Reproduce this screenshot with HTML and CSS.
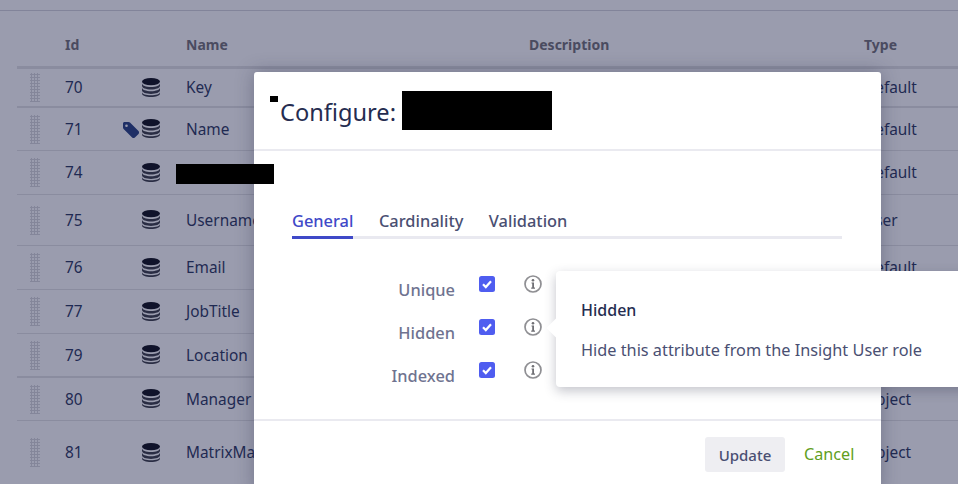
FILE: index.html
```html
<!DOCTYPE html>
<html lang="en">
<head>
<meta charset="utf-8">
<title>Configure attribute</title>
<link rel="stylesheet" href="styles.css">
</head>
<body>
<svg class="defs" width="0" height="0" aria-hidden="true">
  <symbol id="db" viewBox="0 0 18 19">
    <ellipse cx="9" cy="3.6" rx="9" ry="3.6" fill="#10132b"/>
    <path d="M0 5.2c0 2.2 4 3.8 9 3.8s9-1.6 9-3.8v2.6c0 2.2-4 3.7-9 3.7s-9-1.5-9-3.700z" fill="#2a2d44"/>
    <path d="M0 9.600c0 2.200 4 3.700 9 3.700s9-1.500 9-3.700v2.700c0 2.200-4 3.600-9 3.600s-9-1.400-9-3.600z" fill="#2a2d44"/>
    <path d="M0 13.900c0 2.200 4 3.300 9 3.300s9-1.100 9-3.300v1.500c0 2.100-4 3.500-9 3.500s-9-1.400-9-3.500z" fill="#2a2d44"/>
  </symbol>
  <symbol id="info" viewBox="0 0 18 18">
    <circle cx="9" cy="9" r="8" fill="none" stroke="#8f8f93" stroke-width="1.700"/>
    <circle cx="9" cy="5.200" r="1.300" fill="#6f6f74"/>
    <path d="M7.500 7.600h2.500v5h1v1.100H7.200v-1.100h1V8.600h-.7z" fill="#6f6f74"/>
  </symbol>
  <symbol id="check" viewBox="0 0 16 16">
    <rect width="16" height="16" rx="2.500" fill="#4f5df0"/>
    <path d="M4 8.300l2.800 2.800L12 5.200" fill="none" stroke="#fff" stroke-width="2.200"/>
  </symbol>
</svg>

<main class="page">
  <div class="table">
    <div class="row head">
      <span></span><span>Id</span><span></span><span>Name</span><span>Description</span><span>Type</span>
    </div>
    <div class="row r1 thick"><i class="grip"></i><span>70</span><span class="icons"><svg class="dbi"><use href="#db"/></svg></span><span>Key</span><span></span><span>Default</span></div>
    <div class="row r2"><i class="grip"></i><span>71</span><span class="icons">
      <svg class="tag" viewBox="0 0 17 16"><path d="M1 1.500C1 .7 1.700 0 2.500 0h4c.6 0 1.100.2 1.500.6l8.500 8.500c.8.8.8 2 0 2.800l-3.600 3.600c-.8.8-2 .8-2.800 0L1.600 7c-.4-.4-.6-.9-.6-1.500z" fill="#1f2f66"/><circle cx="4.500" cy="3.700" r="1.300" fill="#9a9cae"/></svg>
      <svg class="dbi"><use href="#db"/></svg></span><span>Name</span><span></span><span>Default</span></div>
    <div class="row r3"><i class="grip"></i><span>74</span><span class="icons"><svg class="dbi"><use href="#db"/></svg></span><span><b class="redact name"></b></span><span></span><span>Default</span></div>
    <div class="row r4"><i class="grip"></i><span>75</span><span class="icons"><svg class="dbi"><use href="#db"/></svg></span><span>Username</span><span></span><span>User</span></div>
    <div class="row r5"><i class="grip"></i><span>76</span><span class="icons"><svg class="dbi"><use href="#db"/></svg></span><span>Email</span><span></span><span>Default</span></div>
    <div class="row r5"><i class="grip"></i><span>77</span><span class="icons"><svg class="dbi"><use href="#db"/></svg></span><span>JobTitle</span><span></span><span></span></div>
    <div class="row r5 thick"><i class="grip"></i><span>79</span><span class="icons"><svg class="dbi"><use href="#db"/></svg></span><span>Location</span><span></span><span></span></div>
    <div class="row r8"><i class="grip"></i><span>80</span><span class="icons"><svg class="dbi"><use href="#db"/></svg></span><span>Manager</span><span></span><span>Object</span></div>
    <div class="row r9"><i class="grip"></i><span>81</span><span class="icons"><svg class="dbi"><use href="#db"/></svg></span><span>MatrixManager</span><span></span><span>Object</span></div>
  </div>

  <section class="modal">
    <b class="redact speck"></b>
    <header class="modal-head">
      <h1>Configure:</h1><b class="redact title"></b>
    </header>
    <div class="modal-body">
      <nav class="tabs">
        <a class="tab active">General</a>
        <a class="tab">Cardinality</a>
        <a class="tab">Validation</a>
      </nav>
      <div class="fields">
        <div class="field"><label>Unique</label><svg class="cb"><use href="#check"/></svg><svg class="inf"><use href="#info"/></svg></div>
        <div class="field"><label>Hidden</label><svg class="cb"><use href="#check"/></svg><svg class="inf"><use href="#info"/></svg></div>
        <div class="field"><label>Indexed</label><svg class="cb"><use href="#check"/></svg><svg class="inf"><use href="#info"/></svg></div>
      </div>
    </div>
    <footer class="modal-foot">
      <button class="update" type="button">Update</button>
      <a class="cancel">Cancel</a>
    </footer>
  </section>

  <aside class="pop">
    <h2>Hidden</h2>
    <p>Hide this attribute from the Insight User role</p>
  </aside>
</main>
</body>
</html>
```
FILE: styles.css
```css
* { box-sizing: border-box; }
html, body { margin: 0; height: 100%; overflow: hidden; }
body {
  background: #9a9cae;
  font-family: "Noto Sans", "Open Sans", sans-serif;
  font-size: 15.4px;
  color: #1f2a52;
}
.defs { position: absolute; }
.page { position: relative; width: 958px; height: 484px; overflow: hidden; }
.page::before { content: ""; display: block; height: 10px; border-bottom: 1px solid #82849a; }

.table { margin-left: 17px; }
.row {
  display: grid;
  grid-template-columns: 48px 70px 51px 343px 335px 1fr;
  align-items: center;
  border-bottom: 1px solid #8a8c9f;
}
.row.head {
  height: 58px;
  border-bottom: 3px solid #8a8c9f;
  font-size: 14px;
  font-weight: 700;
  color: #4a4b60;
  padding-top: 12px;
}
.row.thick { border-bottom: 2px solid #8a8c9f; }
.r1 { height: 39px; }
.r2 { height: 43px; }
.r3 { height: 44px; }
.r4 { height: 51px; }
.r5 { height: 44px; }
.r8 { height: 43px; }
.r9 { height: 64px; }
.grip {
  display: block;
  width: 10px;
  height: 29px;
  margin-left: 13px;
  background-image: radial-gradient(#84869a 1px, transparent 1.200px);
  background-size: 3px 3px;
}
.icons { display: flex; justify-content: flex-end; align-items: center; position: relative; }
.dbi { width: 18px; height: 19px; margin-right: 26px; margin-top: -1px; }
.tag { position: absolute; right: 47px; top: 2px; width: 17px; height: 16px; }
.redact { background: #000; display: block; }
.redact.name { position: absolute; left: 176px; top: 164px; width: 98px; height: 20px; z-index: 3; }

.modal {
  position: absolute;
  left: 254px;
  top: 72px;
  width: 627px;
  height: 420px;
  background: #fff;
  border-radius: 3px;
  box-shadow: 0 0 18px rgba(40, 42, 70, .35);
  display: flex;
  flex-direction: column;
  color: #2a3154;
}
.speck { position: absolute; left: 16px; top: 24px; width: 8px; height: 6px; }
.modal-head {
  height: 79px;
  flex: none;
  display: flex;
  align-items: center;
  padding-left: 26px;
  border-bottom: 2px solid #eaeaf0;
  gap: 6px;
}
.modal-head h1 { margin: 3px 0 0; font-size: 23.600px; font-weight: 400; color: #252c50; }
.redact.title { width: 150px; height: 39px; }
.modal-body { flex: none; height: 270px; border-bottom: 2px solid #eaeaf0; padding: 52px 39px 0 38px; }
.tabs { display: flex; gap: 25.500px; border-bottom: 3px solid #e9e9f0; height: 36px; }
.tab { height: 36px; font-size: 16.400px; font-weight: 500; color: #4a4f72; padding-top: 6px; }
.tab.active { color: #3f49c8; border-bottom: 3px solid #3f49c8; }
.fields { margin-top: 30.500px; display: flex; flex-direction: column; }
.field { height: 43.200px; display: flex; align-items: flex-start; }
.field label { width: 163px; text-align: right; font-size: 16.400px; font-weight: 500; color: #6f7390; margin-top: 8px; }
.cb { width: 16px; height: 16px; margin: 6px 0 0 24px; }
.inf { width: 18px; height: 18px; margin: 5px 0 0 29px; }
.modal-foot { display: flex; align-items: flex-start; padding: 16px 0 0 451px; gap: 19px; }
.update {
  width: 80px;
  height: 35px;
  border: 0;
  border-radius: 3px;
  background: #eeeef2;
  color: #4a4f72;
  font: 500 15px "Noto Sans", sans-serif;
  padding: 0;
}
.cancel { color: #5f9e21; font-size: 16.200px; padding-top: 6px; }

.pop {
  position: absolute;
  left: 556px;
  top: 271px;
  width: 420px;
  height: 116px;
  background: #fff;
  border-radius: 4px;
  box-shadow: 0 4px 12px rgba(40, 42, 70, .28);
  padding: 27px 25px;
}
.pop::before {
  content: "";
  position: absolute;
  left: -9px;
  top: 48px;
  width: 18px;
  height: 18px;
  background: #fff;
  transform: rotate(45deg) scale(.75);
}
.pop h2 { margin: 0 0 16px; font-size: 16px; line-height: 24px; font-weight: 500; color: #252c50; }
.pop p { margin: 0; font-size: 16.300px; line-height: 24px; color: #4a4f72; white-space: nowrap; }
```
